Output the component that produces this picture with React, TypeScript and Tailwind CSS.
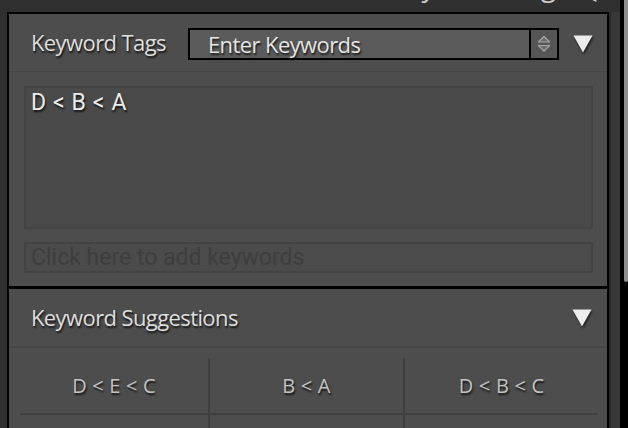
import React from "react";

const Tri = () => (
  <svg width="20" height="18" viewBox="0 0 20 18" className="[filter:drop-shadow(1px_2px_1px_rgba(0,0,0,0.6))]">
    <polygon points="0.5,0.5 19.5,0.5 10,17.5" fill="#ececec" />
  </svg>
);

const Stepper = () => (
  <svg width="14" height="18" viewBox="0 0 14 18">
    <polygon points="7,1.5 12.5,7 1.5,7" fill="#6a6a6a" stroke="#a8a8a8" strokeWidth="1.2" strokeLinejoin="round" />
    <polygon points="1.5,10.5 12.5,10.5 7,16" fill="#6a6a6a" stroke="#a8a8a8" strokeWidth="1.2" strokeLinejoin="round" />
  </svg>
);

const shadow = "[text-shadow:1px_2px_2px_rgba(0,0,0,0.75)]";

export default function App() {
  const cells = ["D < E < C", "B < A", "D < B < C", "", "", ""];
  return (
    <div className="w-[628px] h-[428px] bg-[#303030] overflow-hidden flex font-['Open_Sans',sans-serif]">
      <div className="w-[620px] flex flex-col">
        <div className="h-[12px] shrink-0 overflow-hidden flex justify-end items-start pr-[24px] gap-[26px]">
          <span className="text-[28px] leading-[28px] -mt-[29px] text-[#c8c8c8] tracking-[2px]">Keywording</span>
          <span className="text-[16px] leading-[16px] -mt-[14px] text-[#c8c8c8]">◀</span>
        </div>
        <div className="flex flex-1 min-h-0">
          <div className="w-[7px] shrink-0" />
          <div className="w-[602px] shrink-0 border-2 border-black border-b-0 bg-[#4d4d4d] flex flex-col min-h-0 overflow-hidden">
            {/* Section 1 */}
            <div className="h-[272px] shrink-0 flex flex-col">
              <div className="h-[58px] flex items-center pl-[22px] border-b border-[#444444] shrink-0">
                <span className={`w-[157px] text-[22px] tracking-[-0.6px] text-[#dedede] ${shadow}`}>Keyword Tags</span>
                <div className="w-[371px] h-[32px] border-2 border-black bg-[#5b5b5b] flex items-center mt-[2px]">
                  <span className={`flex-1 pl-[18px] text-[22px] tracking-[-0.6px] text-[#e4e4e4] leading-none ${shadow}`}>Enter Keywords</span>
                  <div className="w-[28px] h-full border-l-2 border-black bg-[#565656] flex items-center justify-center">
                    <Stepper />
                  </div>
                </div>
                <div className="ml-[14px] mt-[2px] flex">
                  <Tri />
                </div>
              </div>
              <div className="flex flex-col pl-[15px] pr-[14px] pt-[14px] gap-[13px]">
                <div className="h-[143px] border-2 border-[#434343] bg-[#4a4a4a] pl-[5px]">
                  <span className={`font-['Roboto',sans-serif] text-[23px] leading-[30px] tracking-[0.6px] text-[#ececec] ${shadow}`}>D &lt; B &lt; A</span>
                </div>
                <div className="h-[31px] border-2 border-[#434343] bg-[#4b4b4b] pl-[5px] flex items-center">
                  <span className="font-['Roboto',sans-serif] text-[23px] text-[#3e3e3e] leading-none">Click here to add keywords</span>
                </div>
              </div>
            </div>
            <div className="h-[3px] shrink-0 bg-black" />
            {/* Section 2 */}
            <div className="flex-1 flex flex-col">
              <div className="h-[59px] flex items-center justify-between pl-[22px] pr-[15px] border-b-2 border-[#454545] shrink-0">
                <span className={`text-[22px] tracking-[-0.6px] text-[#dedede] ${shadow}`}>Keyword Suggestions</span>
                <Tri />
              </div>
              <div className="ml-[11px] mr-[9px] pt-[10px] grid grid-cols-[190px_195px_1fr]">
                {cells.map((c, i) => (
                  <div
                    key={i}
                    className={`h-[57px] flex items-center justify-center border-b-2 border-[#404040] ${i % 3 !== 2 ? "border-r-2" : ""} text-[20px] text-[#c2c2c2] tracking-[0.2px] ${shadow}`}
                  >
                    {c}
                  </div>
                ))}
              </div>
            </div>
          </div>
          <div className="w-[11px] shrink-0 bg-[#383838] border-l-2 border-[#2a2a2a]" />
        </div>
      </div>
      <div className="w-[8px] bg-black flex justify-end">
        <div className="w-[4px] h-[282px] bg-[#8e8e8e] rounded-b-[2px]" />
      </div>
    </div>
  );
}
